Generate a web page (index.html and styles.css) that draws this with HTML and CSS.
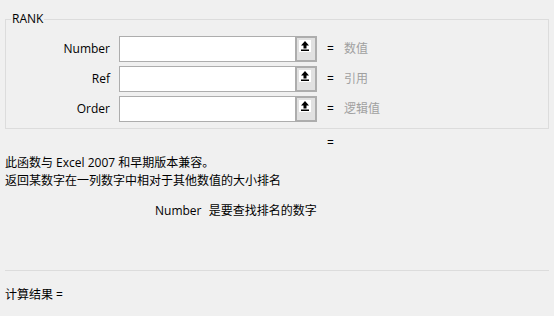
FILE: index.html
```html
<!DOCTYPE html>
<html lang="zh-CN">
<head>
  <meta charset="UTF-8" />
  <title>函数参数 - RANK</title>
  <link rel="stylesheet" href="styles.css">
</head>
<body>

<fieldset class="func-group">
  <legend>RANK</legend>
  <div class="arg-rows">
    <label class="arg-name" for="argNumber">Number</label>
    <div class="ref-box">
      <input type="text" id="argNumber">
      <button type="button" class="pick-btn">
        <svg width="12" height="12" viewBox="0 0 12 12"><rect width="12" height="12" fill="#fff"/><polygon points="6,1 2,5.5 4.5,5.5 4.5,8.5 7.5,8.5 7.5,5.5 10,5.5" fill="#000"/><rect x="2" y="9.5" width="8" height="1.5" fill="#000"/></svg>
      </button>
    </div>
    <span class="eq">=</span>
    <span class="arg-hint">数值</span>

    <label class="arg-name" for="argRef">Ref</label>
    <div class="ref-box">
      <input type="text" id="argRef">
      <button type="button" class="pick-btn">
        <svg width="12" height="12" viewBox="0 0 12 12"><rect width="12" height="12" fill="#fff"/><polygon points="6,1 2,5.5 4.5,5.5 4.5,8.5 7.5,8.5 7.5,5.5 10,5.5" fill="#000"/><rect x="2" y="9.5" width="8" height="1.5" fill="#000"/></svg>
      </button>
    </div>
    <span class="eq">=</span>
    <span class="arg-hint">引用</span>

    <label class="arg-name" for="argOrder">Order</label>
    <div class="ref-box">
      <input type="text" id="argOrder">
      <button type="button" class="pick-btn">
        <svg width="12" height="12" viewBox="0 0 12 12"><rect width="12" height="12" fill="#fff"/><polygon points="6,1 2,5.5 4.5,5.5 4.5,8.5 7.5,8.5 7.5,5.5 10,5.5" fill="#000"/><rect x="2" y="9.5" width="8" height="1.5" fill="#000"/></svg>
      </button>
    </div>
    <span class="eq">=</span>
    <span class="arg-hint">逻辑值</span>
  </div>
</fieldset>

<div class="total-eq">=</div>

<div class="func-info">
  <div>此函数与 Excel 2007 和早期版本兼容。</div>
  <div>返回某数字在一列数字中相对于其他数值的大小排名</div>
</div>

<div class="arg-desc">
  <span class="arg-desc-name">Number</span>
  <span>是要查找排名的数字</span>
</div>

<hr class="divider">

<div class="calc-result">计算结果 =</div>

</body>
</html>
```

FILE: styles.css
```css
body {
  margin: 0;
  background-color: #f0f0f0;
  font-family: "Open Sans", "Noto Sans CJK SC", sans-serif;
  font-size: 12px;
  line-height: 18px;
  color: #000;
}

.func-group {
  margin: 11px 5px 0 5px;
  padding: 0 0 6px 0;
  border: 1px solid #dcdcdc;
  min-width: 0;
}

.func-group legend {
  margin-left: 5px;
  padding: 0 1px;
  line-height: 16px;
}

.arg-rows {
  display: grid;
  grid-template-columns: 104px 198px auto 1fr;
  column-gap: 9px;
  row-gap: 4px;
  align-items: center;
  padding-top: 9px;
}

.arg-name {
  text-align: right;
}

.ref-box {
  display: flex;
  height: 26px;
}

.ref-box input {
  flex: 1;
  min-width: 0;
  box-sizing: border-box;
  height: 26px;
  margin: 0;
  border: 1px solid #adadad;
  border-right: none;
  background: #fff;
  outline: none;
}

.pick-btn {
  box-sizing: border-box;
  width: 22px;
  height: 26px;
  margin: 0;
  padding: 2px;
  border: 2px solid #adadad;
  background-color: #e1e1e1;
  display: flex;
  align-items: flex-start;
  justify-content: flex-start;
}

.pick-btn svg {
  display: block;
}

.eq {
  margin-left: 1px;
}

.arg-hint {
  margin-left: 1px;
  color: #a0a0a0;
}

.total-eq {
  margin: 5px 0 0 327px;
}

.func-info {
  margin: 2px 0 0 5px;
}

.arg-desc {
  margin: 12px 0 0 155px;
}

.arg-desc-name {
  margin-right: 4px;
}

.divider {
  margin: 50px 5px 0 5px;
  border: none;
  border-top: 1px solid #dcdcdc;
  height: 0;
}

.calc-result {
  margin: 15px 0 1px 5px;
}
```
